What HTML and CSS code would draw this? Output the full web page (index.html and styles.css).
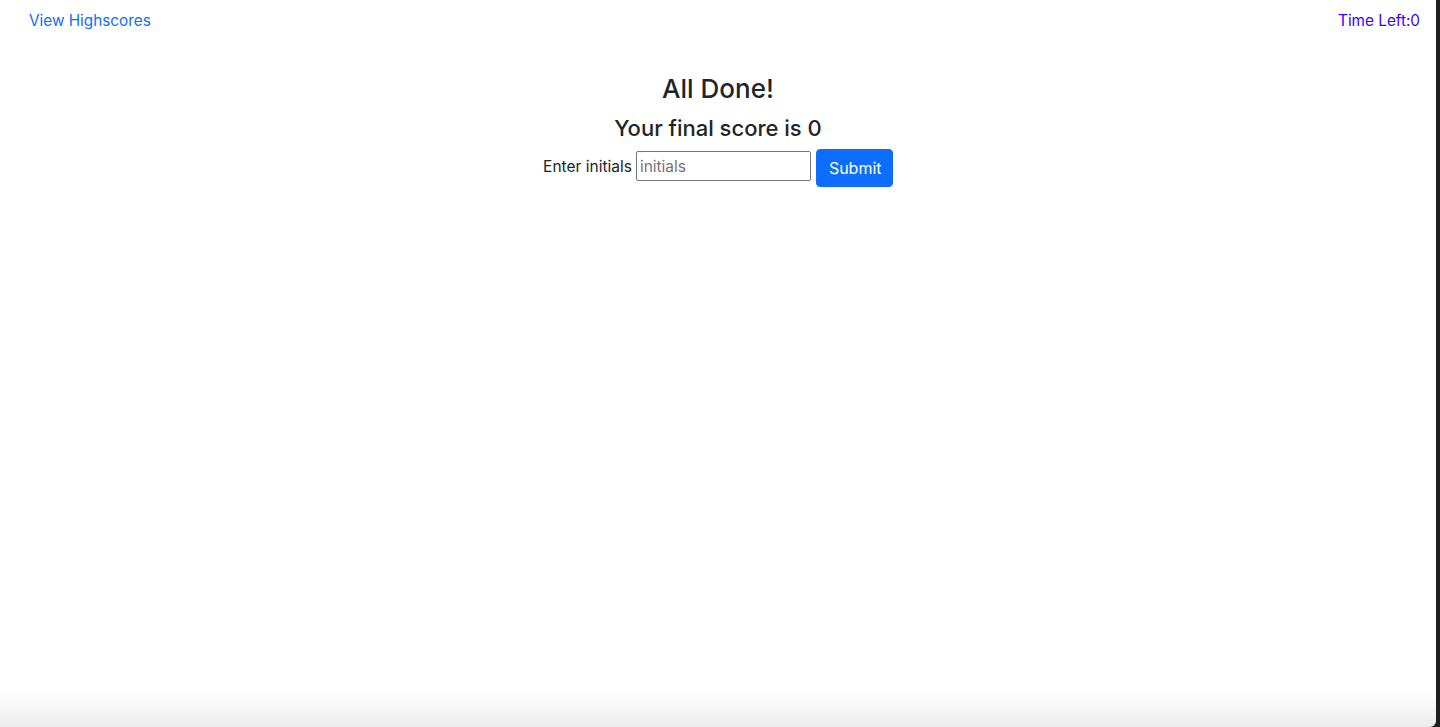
FILE: index.html
```html
<!DOCTYPE html>
<html lang="en">
<head>
<meta charset="utf-8">
<title>Quiz</title>
<link rel="stylesheet" href="styles.css">
</head>
<body>
<div class="window">
  <div class="page">
    <header class="topbar">
      <a class="highscores" href="#">View Highscores</a>
      <span class="timer">Time Left:0</span>
    </header>
    <main class="done">
      <h3 class="title">All Done!</h3>
      <h4 class="score">Your final score is 0</h4>
      <form class="initials-form">
        <label class="label" for="initials">Enter initials</label>
        <input class="input" id="initials" type="text" placeholder="initials">
        <button class="btn" type="button">Submit</button>
      </form>
    </main>
  </div>
  <div class="edge"></div>
</div>
</body>
</html>
```
FILE: styles.css
```css
html, body {
  margin: 0;
  height: 100%;
}
body {
  font-family: Inter, "Noto Sans", "Liberation Sans", sans-serif;
  color: #212529;
  background: #1c1c1e;
}
.window {
  display: flex;
  height: 727px;
  overflow: hidden;
}
.page {
  flex: 1;
  background: linear-gradient(to bottom, #ffffff 0, #ffffff 690px, #ececec 727px);
  border-bottom-right-radius: 6px;
  display: flex;
  flex-direction: column;
}
.edge {
  width: 4px;
  background: #1f1f20;
}
.topbar {
  display: flex;
  justify-content: space-between;
  padding: 9px 16px 0 29px;
  font-size: 15.3px;
  line-height: 24px;
}
.highscores {
  color: #0d6efd;
  text-decoration: none;
}
.timer {
  color: #3a00ff;
}
.done {
  display: flex;
  flex-direction: column;
  align-items: center;
  padding-top: 39px;
}
.title {
  margin: 0 0 8px;
  font-size: 26px;
  font-weight: 500;
  line-height: 1.2;
  height: 34px;
  display: flex;
  align-items: center;
}
.score {
  margin: 0 0 6px;
  font-size: 22px;
  font-weight: 500;
  line-height: 1.2;
  height: 29px;
  display: flex;
  align-items: center;
}
.initials-form {
  display: flex;
  align-items: flex-start;
  font-size: 16px;
}
.label {
  margin-top: 6px;
  margin-right: 4px;
  font-size: 15.5px;
  line-height: 24px;
}
.input {
  margin-top: 2px;
  width: 175px;
  height: 30px;
  box-sizing: border-box;
  border: 1px solid #767676;
  border-radius: 2px;
  padding: 1px 3px;
  font-family: inherit;
  font-size: 15.5px;
  color: #212529;
}
.input::placeholder {
  color: #757575;
}
.btn {
  margin-left: 5px;
  width: 77px;
  height: 38px;
  border: 1px solid #0d6efd;
  border-radius: 4px;
  background: #0d6efd;
  color: #fff;
  font-family: inherit;
  font-size: 16px;
  line-height: 1.5;
  padding: 6px 12px;
}
```
